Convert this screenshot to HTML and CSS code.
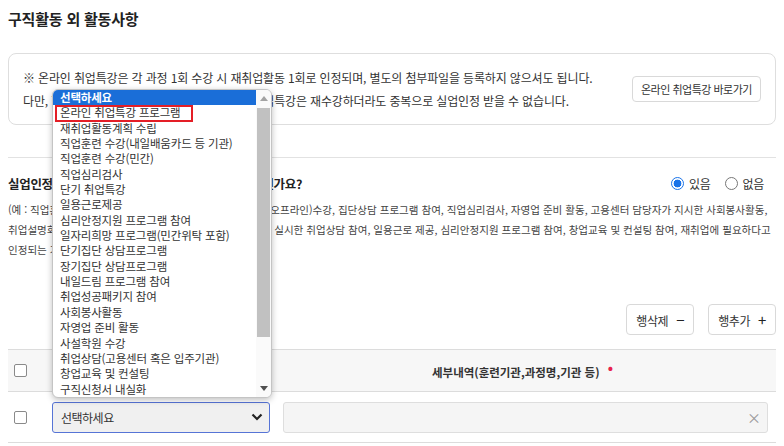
FILE: index.html
```html
<!DOCTYPE html>
<html lang="ko">
<head>
    <meta charset="UTF-8">
    <meta name="viewport" content="width=device-width, initial-scale=1.0">
    <title>구직활동 외 활동사항</title>
    <link rel="stylesheet" href="styles.css">
</head>
<body>

<div class="page">

    <!-- Title -->
    <h2 class="page-title">구직활동 외 활동사항</h2>

    <!-- Notice box -->
    <div class="notice-box">
        <div class="notice-text">
            <p>※ 온라인 취업특강은 각 과정 1회 수강 시 재취업활동 1회로 인정되며, 별도의 첨부파일을 등록하지 않으셔도 됩니다.</p>
            <p>다만, 한번 수강하여 인정받았던 과정의 온라인 취업특강은 재수강하더라도 중복으로 실업인정 받을 수 없습니다.</p>
        </div>
        <button class="btn-outline btn-link">온라인 취업특강 바로가기</button>
    </div>

    <!-- Question -->
    <div class="question-section">
        <div class="question-row">
            <h3>실업인정 대상기간 중 구직활동 외 활동사항이 있으신가요?</h3>
            <div class="radio-group">
                <label class="radio"><span class="radio-dot checked"></span>있음</label>
                <label class="radio"><span class="radio-dot"></span>없음</label>
            </div>
        </div>
        <p class="example-text">
            (예 : 직업훈련 수강(내일배움카드), 구직자 취업특강(온라인/오프라인)수강, 집단상담 프로그램 참여, 직업심리검사, 자영업 준비 활동, 고용센터 담당자가 지시한 사회봉사활동,<br>
            취업설명회 참여, 고용센터 또는 고용센터가 위탁한 기관에서 실시한 취업상담 참여, 일용근로 제공, 심리안정지원 프로그램 참여, 창업교육 및 컨설팅 참여, 재취업에 필요하다고<br>
            인정되는 기타 활동 등)
        </p>
    </div>

    <!-- Row buttons -->
    <div class="row-actions">
        <button class="btn-outline btn-row">행삭제 <span class="sign">−</span></button>
        <button class="btn-outline btn-row">행추가 <span class="sign">+</span></button>
    </div>

    <!-- Table -->
    <table class="activity-table">
        <thead>
            <tr>
                <th class="col-check"><span class="checkbox"></span></th>
                <th class="col-type">활동구분 <span class="req">•</span></th>
                <th class="col-detail">세부내역(훈련기관,과정명,기관 등) <span class="req">•</span></th>
            </tr>
        </thead>
        <tbody>
            <tr>
                <td class="col-check"><span class="checkbox"></span></td>
                <td class="col-type">
                    <div class="fake-select">
                        <span>선택하세요</span>
                        <svg width="12" height="8" viewBox="0 0 12 8"><path d="M1.5 1.5 L6 6 L10.5 1.5" fill="none" stroke="#222" stroke-width="2.2"/></svg>
                    </div>
                </td>
                <td class="col-detail">
                    <div class="fake-input"><span class="clear">×</span></div>
                </td>
            </tr>
        </tbody>
    </table>

</div>

<!-- Opened select list -->
<div class="select-popup">
    <ul class="option-list">
        <li class="selected">선택하세요</li>
        <li>온라인 취업특강 프로그램</li>
        <li>재취업활동계획 수립</li>
        <li>직업훈련 수강(내일배움카드 등 기관)</li>
        <li>직업훈련 수강(민간)</li>
        <li>직업심리검사</li>
        <li>단기 취업특강</li>
        <li>일용근로제공</li>
        <li>심리안정지원 프로그램 참여</li>
        <li>일자리희망 프로그램(민간위탁 포함)</li>
        <li>단기집단 상담프로그램</li>
        <li>장기집단 상담프로그램</li>
        <li>내일드림 프로그램 참여</li>
        <li>취업성공패키지 참여</li>
        <li>사회봉사활동</li>
        <li>자영업 준비 활동</li>
        <li>사설학원 수강</li>
        <li>취업상담(고용센터 혹은 입주기관)</li>
        <li>창업교육 및 컨설팅</li>
        <li>구직신청서 내실화</li>
    </ul>
    <div class="scrollbar">
        <span class="arrow-up"></span>
        <div class="scroll-track"><div class="scroll-thumb"></div></div>
        <span class="arrow-down"></span>
    </div>
    <div class="highlight-box"></div>
</div>

</body>
</html>
```

FILE: styles.css
```css
/* Basic Reset */
* {
    margin: 0;
    padding: 0;
    box-sizing: border-box;
}

body {
    font-family: "Noto Sans CJK KR", "Noto Sans", sans-serif;
    background-color: #ffffff;
    color: #333;
    width: 784px;
    height: 446px;
    overflow: hidden;
    position: relative;
}

.page {
    padding: 0 8px;
}

/* Title */
.page-title {
    font-size: 15px;
    font-weight: bold;
    color: #222;
    letter-spacing: -0.2px;
    line-height: 22px;
    padding-top: 8px;
    margin-bottom: 23px;
}

/* Notice box */
.notice-box {
    display: flex;
    align-items: center;
    justify-content: space-between;
    border: 1px solid #dedede;
    border-radius: 8px;
    padding: 12px 14px;
    height: 72px;
}

.notice-text p {
    font-size: 12px;
    letter-spacing: -0.15px;
    line-height: 23px;
    color: #333;
    white-space: nowrap;
}

.btn-outline {
    font-family: inherit;
    background: #fff;
    border: 1px solid #d9d9d9;
    border-radius: 4px;
    color: #333;
    cursor: pointer;
}

.btn-link {
    width: 129px;
    height: 26px;
    font-size: 11px;
    letter-spacing: -0.5px;
}

/* Question section */
.question-section {
    margin-top: 32px;
    border-top: 1px solid #e2e2e2;
    padding-top: 13px;
}

.question-row {
    display: flex;
    justify-content: space-between;
    align-items: center;
    height: 24px;
}

.question-row h3 {
    font-size: 12.5px;
    font-weight: bold;
    color: #222;
    letter-spacing: -0.3px;
}

.radio-group {
    display: flex;
    gap: 14px;
    padding-right: 12px;
}

.radio {
    display: flex;
    align-items: center;
    gap: 5px;
    font-size: 12px;
    letter-spacing: -0.3px;
    color: #333;
}

.radio-dot {
    width: 13px;
    height: 13px;
    border: 1px solid #777;
    border-radius: 50%;
    background: #fff;
}

.radio-dot.checked {
    border: 1px solid #1a73e8;
    background: radial-gradient(circle, #1a73e8 0 3.6px, #fff 4.2px);
}

.example-text {
    margin-top: 5px;
    font-size: 10.55px;
    letter-spacing: 0;
    line-height: 20px;
    color: #444;
    white-space: nowrap;
}

/* Row buttons */
.row-actions {
    display: flex;
    justify-content: flex-end;
    gap: 14px;
    margin-top: 44px;
}

.btn-row {
    height: 31px;
    padding: 0 9px;
    font-size: 12px;
    letter-spacing: -0.4px;
}

.btn-row .sign {
    font-size: 15px;
    margin-left: 5px;
    color: #222;
}

/* Table */
.activity-table {
    width: 100%;
    margin-top: 14px;
    border-collapse: collapse;
}

.activity-table th,
.activity-table td {
    border-top: 1px solid #dcdcdc;
    border-bottom: 1px solid #dcdcdc;
    text-align: left;
}

.activity-table th {
    height: 42px;
    background-color: #f7f7f7;
    font-size: 11.5px;
    letter-spacing: 0;
    font-weight: bold;
    color: #333;
}

.activity-table td {
    height: 51px;
}

.col-check {
    width: 44px;
    padding-left: 6px;
}

.col-type {
    width: 231px;
}

.activity-table th.col-type,
.activity-table th.col-detail {
    text-align: center;
}

.activity-table th.col-detail {
    padding-right: 14px;
}

.req {
    color: #e8224d;
    font-size: 14px;
    position: relative;
    top: -4px;
    margin-left: 5px;
}

.checkbox {
    display: block;
    width: 13px;
    height: 13px;
    border: 1px solid #8a8a8a;
    border-radius: 2px;
    background: #fff;
}

.fake-select {
    width: 218px;
    height: 31px;
    border: 1px solid #5674d6;
    border-radius: 3px;
    background: #f0f0f0;
    display: flex;
    align-items: center;
    justify-content: space-between;
    padding: 0 6px 0 8px;
    font-size: 12px;
    letter-spacing: -0.5px;
    color: #333;
}

.fake-input {
    width: 485px;
    height: 31px;
    border: 1px solid #dedede;
    border-radius: 3px;
    background: #f5f5f5;
    display: flex;
    align-items: center;
    justify-content: flex-end;
    padding-right: 6px;
}

.clear {
    font-size: 14px;
    color: #999;
}

/* Opened select list */
.select-popup {
    position: absolute;
    left: 52px;
    top: 89px;
    width: 220px;
    height: 309px;
    background: #fff;
    border: 1px solid #c4c4c4;
    border-radius: 6px;
    box-shadow: 0 2px 6px rgba(0, 0, 0, 0.25);
    display: flex;
    overflow: hidden;
}

.option-list {
    list-style: none;
    flex: 1;
}

.option-list li {
    height: 15.35px;
    line-height: 15.35px;
    padding-left: 7px;
    font-size: 11.5px;
    letter-spacing: -0.18px;
    color: #333;
    white-space: nowrap;
}

.option-list li.selected {
    background-color: #1a6ed8;
    color: #fff;
    font-weight: bold;
}

.scrollbar {
    width: 15px;
    background: #fafafa;
    display: flex;
    flex-direction: column;
    align-items: center;
    padding: 6px 0;
}

.arrow-up,
.arrow-down {
    width: 0;
    height: 0;
    border-left: 4px solid transparent;
    border-right: 4px solid transparent;
}

.arrow-up {
    border-bottom: 5px solid #a3a3a3;
}

.arrow-down {
    border-top: 5px solid #505050;
}

.scroll-track {
    flex: 1;
    width: 100%;
    padding: 7px 1px 0;
}

.scroll-thumb {
    height: 229px;
    background: #c1c1c1;
}

.highlight-box {
    position: absolute;
    left: 2px;
    top: 15px;
    width: 138px;
    height: 17px;
    border: 2px solid #e41e26;
}
```
